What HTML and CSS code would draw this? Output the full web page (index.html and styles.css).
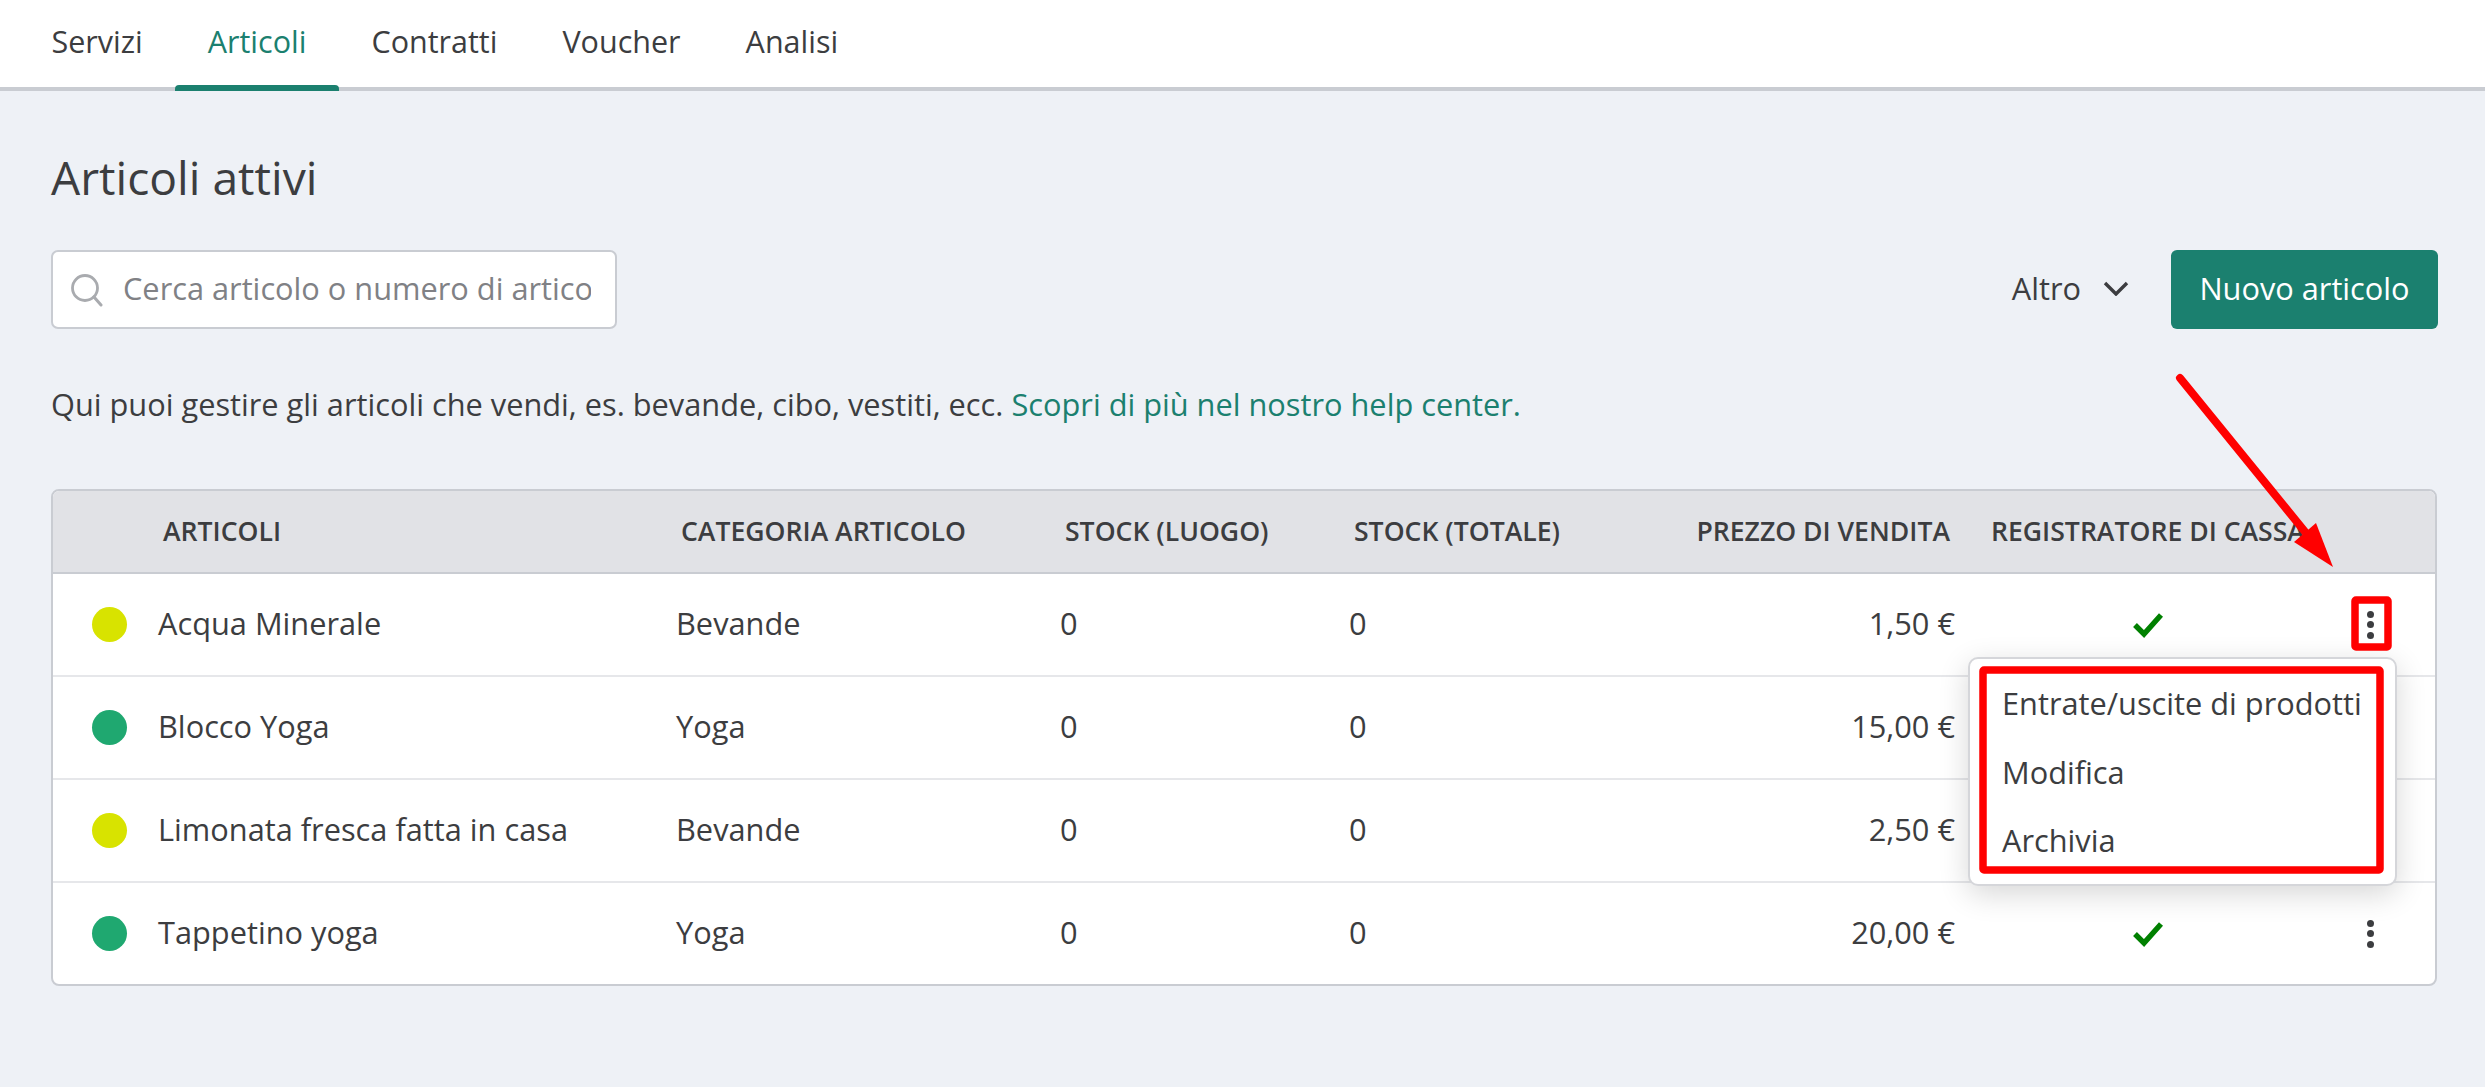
FILE: index.html
```html
<!DOCTYPE html>
<html lang="it">
<head>
<meta charset="utf-8">
<title>Articoli attivi</title>
<link rel="stylesheet" href="styles.css">
</head>
<body>
<nav class="tabs">
  <a class="tab">Servizi</a>
  <a class="tab active">Articoli</a>
  <a class="tab">Contratti</a>
  <a class="tab">Voucher</a>
  <a class="tab">Analisi</a>
</nav>
<main class="page">
  <h1 class="title">Articoli attivi</h1>
  <div class="toolbar">
    <label class="search">
      <svg class="search-icon" viewBox="0 0 34 34" width="34" height="34"><circle cx="15" cy="15" r="12.5" fill="none" stroke="#a9abaf" stroke-width="2.8"/><path d="M24 24l7 8" fill="none" stroke="#a9abaf" stroke-width="3" stroke-linecap="round"/></svg>
      <input class="search-input" type="text" placeholder="Cerca articolo o numero di articolo">
    </label>
    <div class="actions">
      <button class="more">Altro
        <svg viewBox="0 0 26 16" width="26" height="16"><path d="M2 3l11 11L24 3" fill="none" stroke="#3c3d40" stroke-width="3.4"/></svg>
      </button>
      <button class="primary">Nuovo articolo</button>
    </div>
  </div>
  <p class="intro">Qui puoi gestire gli articoli che vendi, es. bevande, cibo, vestiti, ecc. <a class="link">Scopri di più nel nostro help center.</a></p>
  <section class="table">
    <div class="row head">
      <span></span>
      <span class="name">ARTICOLI</span>
      <span>CATEGORIA ARTICOLO</span>
      <span>STOCK (LUOGO)</span>
      <span>STOCK (TOTALE)</span>
      <span class="price">PREZZO DI VENDITA</span>
      <span class="register">REGISTRATORE DI CASSA</span>
      <span></span>
    </div>
    <div class="row">
      <span class="dot lime"></span><span class="name">Acqua Minerale</span><span>Bevande</span><span>0</span><span>0</span><span class="price">1,50 €</span>
      <span class="check"><svg viewBox="0 0 32 26" width="32" height="26"><path d="M3 13l9 9L29 3" fill="none" stroke="#008000" stroke-width="5.4"/></svg></span>
      <span class="kebab"><i></i><i></i><i></i></span>
      <div class="menu">
        <a>Entrate/uscite di prodotti</a>
        <a>Modifica</a>
        <a>Archivia</a>
      </div>
    </div>
    <div class="row">
      <span class="dot green"></span><span class="name">Blocco Yoga</span><span>Yoga</span><span>0</span><span>0</span><span class="price">15,00 €</span>
      <span class="check"><svg viewBox="0 0 32 26" width="32" height="26"><path d="M3 13l9 9L29 3" fill="none" stroke="#008000" stroke-width="5.4"/></svg></span>
      <span class="kebab"><i></i><i></i><i></i></span>
    </div>
    <div class="row">
      <span class="dot lime"></span><span class="name">Limonata fresca fatta in casa</span><span>Bevande</span><span>0</span><span>0</span><span class="price">2,50 €</span>
      <span class="check"><svg viewBox="0 0 32 26" width="32" height="26"><path d="M3 13l9 9L29 3" fill="none" stroke="#008000" stroke-width="5.4"/></svg></span>
      <span class="kebab"><i></i><i></i><i></i></span>
    </div>
    <div class="row">
      <span class="dot green"></span><span class="name">Tappetino yoga</span><span>Yoga</span><span>0</span><span>0</span><span class="price">20,00 €</span>
      <span class="check"><svg viewBox="0 0 32 26" width="32" height="26"><path d="M3 13l9 9L29 3" fill="none" stroke="#008000" stroke-width="5.4"/></svg></span>
      <span class="kebab"><i></i><i></i><i></i></span>
    </div>
  </section>
</main>
<svg class="annotations" viewBox="0 0 2485 1087" width="2485" height="1087">
  <path d="M2180 378L2306 533" fill="none" stroke="#ff0000" stroke-width="8" stroke-linecap="round"/>
  <path d="M2333 567L2316 523L2294 542Z" fill="#ff0000"/>
  <rect x="2355" y="600" width="33" height="47" rx="1" fill="none" stroke="#ff0000" stroke-width="7.5"/>
  <rect x="1983" y="670" width="397" height="200" rx="1" fill="none" stroke="#ff0000" stroke-width="7.5"/>
</svg>
</body>
</html>
```
FILE: styles.css
```css
* { box-sizing: border-box; }
html, body { margin: 0; height: 1087px; overflow: hidden; }
body {
  position: relative;
  background: #eef1f6;
  color: #3c3d40;
  font-family: "Open Sans", "Liberation Sans", sans-serif;
  font-size: 30.75px;
}
.tabs {
  display: flex;
  height: 91px;
  padding-left: 19px;
  background: #fff;
  border-bottom: 4px solid #c9ccd2;
}
.tab {
  position: relative;
  padding: 0 32.5px;
  font-size: 30.5px;
  line-height: 82px;
  font-weight: 500;
}
.tab.active { color: #1b806f; }
.tab.active::after {
  content: "";
  position: absolute;
  left: 0;
  right: 0;
  bottom: -4px;
  height: 6px;
  border-radius: 4px 4px 0 0;
  background: #1b806f;
}
.page { padding: 0 47px 0 51px; }
.title {
  margin: 0;
  padding-top: 52px;
  font-size: 46.2px;
  font-weight: 400;
  line-height: 70px;
}
.toolbar {
  display: flex;
  justify-content: space-between;
  margin-top: 37px;
  height: 79px;
}
.search {
  display: flex;
  align-items: center;
  width: 566px;
  padding: 0 24px 0 17px;
  gap: 19px;
  background: #fff;
  border: 2px solid #c9ccd2;
  border-radius: 7px;
}
.search-icon { flex: none; }
.search-input {
  flex: 1;
  min-width: 0;
  border: 0;
  padding: 0 0 3px;
  outline: 0;
  font: inherit;
  color: inherit;
}
.search-input::placeholder { color: #808185; opacity: 1; }
.actions { display: flex; align-items: stretch; gap: 42px; }
.more, .primary { font: inherit; border: 0; padding: 0 0 3px; }
.more {
  display: flex;
  align-items: center;
  gap: 22px;
  background: none;
  color: inherit;
}
.primary {
  width: 267px;
  background: #1b806f;
  color: #fff;
  border-radius: 6px;
}
.intro { margin: 55px 0 0; line-height: 40px; }
.link { color: #1b806f; }
.table {
  margin-top: 65px;
  width: 2386px;
  background: #fff;
  border: 2px solid #c9ccd2;
  border-radius: 8px;
}
.row {
  position: relative;
  display: grid;
  grid-template-columns: 105px 518px 384px 289px 351px 255px 353px 1fr;
  align-items: center;
  height: 103px;
  border-bottom: 2px solid #e6e7ea;
}
.row:last-child { height: 101px; border-bottom: 0; }
.row > span:not(.dot, .check, .kebab) { margin-bottom: 3px; }
.row > .dot { justify-self: start; margin-left: 39px; }
.row.head {
  height: 83px;
  border-bottom: 2px solid #c9ccd2;
  border-radius: 6px 6px 0 0;
  background: #e1e2e6;
  font-size: 26.6px;
  font-weight: 600;
}
.row.head > span { margin-bottom: 2px; padding-left: 5px; white-space: nowrap; }
.dot { width: 35px; height: 35px; border-radius: 50%; }
.lime { background: #d8e300; }
.green { background: #1fa870; }
.price { text-align: right; }
.row.head > .price { justify-self: end; padding-left: 0; margin-right: 5px; }
.row.head > .register { padding-left: 36px; }
.check { display: flex; justify-content: center; padding-left: 33px; }
.kebab {
  display: flex;
  flex-direction: column;
  align-items: center;
  gap: 3.5px;
  padding-right: 2px;
}
.kebab i { width: 7px; height: 7px; border-radius: 50%; background: #3c3d40; }
.menu {
  position: absolute;
  z-index: 2;
  left: 1915px;
  top: 83px;
  width: 429px;
  height: 229px;
  padding: 9.5px 0;
  display: flex;
  flex-direction: column;
  background: #fff;
  border: 2px solid #d5d6da;
  border-radius: 10px;
  box-shadow: 0 8px 30px rgba(0, 0, 0, 0.16);
}
.menu a { flex: 1; padding-left: 32px; display: flex; align-items: center; white-space: nowrap; }
.annotations { position: absolute; left: 0; top: 0; z-index: 3; pointer-events: none; }
```
